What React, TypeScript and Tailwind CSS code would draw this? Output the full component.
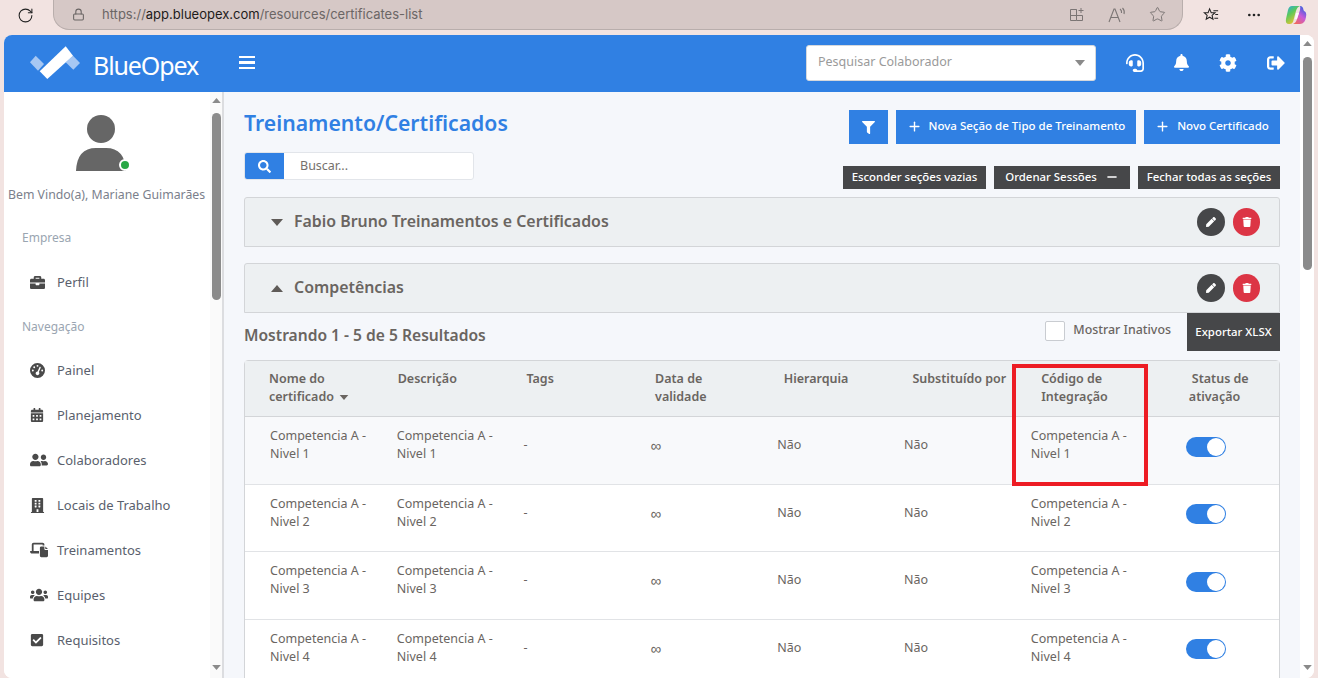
import React from 'react';
import { FaBell, FaBriefcase, FaBuilding, FaCalendarAlt, FaCheckSquare, FaCog, FaFilter, FaHeadset, FaPen, FaSearch, FaSignOutAlt, FaTrash, FaUserFriends, FaUsers } from 'react-icons/fa';
import { FaGaugeHigh, FaLaptopFile } from 'react-icons/fa6';
import { Ellipsis, Lock, Minus, Plus, RotateCw, Star } from 'lucide-react';

const navItems = [
  { label: 'Painel', icon: FaGaugeHigh, size: 15 },
  { label: 'Planejamento', icon: FaCalendarAlt, size: 14 },
  { label: 'Colaboradores', icon: FaUserFriends, size: 18 },
  { label: 'Locais de Trabalho', icon: FaBuilding, size: 15 },
  { label: 'Treinamentos', icon: FaLaptopFile, size: 18 },
  { label: 'Equipes', icon: FaUsers, size: 18 },
  { label: 'Requisitos', icon: FaCheckSquare, size: 14 },
];

const rows = [1, 2, 3, 4, 5];

const Caret = ({ up, className }: { up?: boolean; className?: string }) => (
  <svg viewBox="0 0 12 7" className={className}>
    <path d={up ? 'M6 0 12 7H0Z' : 'M0 0H12L6 7Z'} fill="currentColor" />
  </svg>
);

const SectionHeader = ({ title, open }: { title: string; open?: boolean }) => (
  <div className="flex h-[50px] items-center rounded-t-[3px] border border-[#d3d5d8] bg-[#edf0f2] pl-[26px] pr-[19px]">
    <Caret up={open} className="mr-[11px] h-[7px] w-[12px] text-[#5f5b58]" />
    <span className="text-[15.9px] font-semibold text-[#6a6561]">{title}</span>
    <div className="ml-auto flex gap-[8px]">
      <button className="flex h-[28px] w-[28px] items-center justify-center rounded-full bg-[#464749] text-white">
        <FaPen size={10} />
      </button>
      <button className="flex h-[28px] w-[27px] items-center justify-center rounded-full bg-[#dc3545] text-white">
        <FaTrash size={10} />
      </button>
    </div>
  </div>
);

export default function App() {
  return (
    <div className="flex h-[678px] w-[1318px] flex-col overflow-hidden bg-[#f2e3e1] font-['Noto_Sans',sans-serif] text-[13px] text-[#6a6561]">
      {/* browser chrome */}
      <div className="flex h-[35px] shrink-0 items-start">
        <div className="flex h-[30px] w-[53px] items-center justify-center pr-[3px]">
          <RotateCw size={17} strokeWidth={1.5} className="text-[#222]" />
        </div>
        <div className="flex h-[30px] w-[1130px] items-center rounded-b-[16px] border border-t-0 border-[#b9aeac] bg-[#d6c8c6] pl-[18px] pr-[16px] font-['Inter',sans-serif] text-[13px]">
          <Lock size={13} className="text-[#6b6665]" />
          <span className="ml-[17px] text-[#6b6665]">https://<span className="text-[#1d1b1b]">app.blueopex.com</span>/resources/certificates-list</span>
          <div className="ml-auto flex items-center gap-[23px] text-[#7b7574]">
            <svg viewBox="0 0 16 16" className="h-[16px] w-[16px]" fill="none" stroke="currentColor">
              <path d="M1.5 2.5h6v11h-6zM1.5 8.5h12v5h-6M7.5 8.5v-6M12 1v5M9.5 3.5h5" />
            </svg>
            <svg viewBox="0 0 18 16" className="h-[16px] w-[18px]" fill="none" stroke="currentColor" strokeWidth="1.1">
              <path d="M1 15 6 2h1l5 13M3 10.5h7.5M12 2q2 1.5 1.5 4M14.5 1q2.5 2.5 1.5 6" />
            </svg>
            <Star size={17} strokeWidth={1.4} />
          </div>
        </div>
        <div className="flex h-[30px] flex-1 items-center text-[#222]">
          <svg viewBox="0 0 18 18" className="ml-[20px] h-[17px] w-[17px]" fill="none" stroke="currentColor" strokeWidth="1.1">
            <path d="M7 2 8.7 6h4L9.6 8.8l1 4.2L7 10.8 3.4 13l1-4.2L1.4 6h4ZM11 4h5M13 8h3M12 12h4" />
          </svg>
          <Ellipsis size={16} className="ml-[26px]" />
          <svg viewBox="0 0 24 24" className="ml-[22px] h-[24px] w-[24px]">
            <defs>
              <linearGradient id="copilotLeft" x1="0" y1="0" x2="0.6" y2="1">
                <stop offset="0" stopColor="#28a8e8" />
                <stop offset="0.45" stopColor="#5cc95a" />
                <stop offset="1" stopColor="#f5c330" />
              </linearGradient>
              <linearGradient id="copilotRight" x1="0.8" y1="0" x2="0.2" y2="1">
                <stop offset="0" stopColor="#2b5fe0" />
                <stop offset="0.5" stopColor="#c85ad8" />
                <stop offset="1" stopColor="#f2695a" />
              </linearGradient>
            </defs>
            <path d="M8 3h8q-3 1-4 5l-3 11q-1 2-3 2H5Q1 21 2 16l2-9q1-4 4-4Z" fill="url(#copilotLeft)" />
            <path d="M16 3q3 0 3.5 4l.5 1q3 1 2 6-1 7-6 7H9q3-1 4-5l3-9q.5-3 0-4Z" fill="url(#copilotRight)" />
            <path d="M12 10h3l-2 6h-2Z" fill="#fff" opacity="0.85" />
          </svg>
        </div>
      </div>

      <div className="flex min-h-0 flex-1 px-[4px]">
        <div className="flex min-w-0 flex-1 overflow-hidden rounded-[8px] bg-white">
          <div className="flex w-[1296px] flex-col">
            {/* top bar */}
            <header className="flex h-[57px] shrink-0 items-center bg-[#3080e3] pb-[2px] pr-[15px]">
              <svg viewBox="0 0 51 33" className="ml-[26px] h-[33px] w-[51px]">
                <path d="M0 16.3 5.7 9.7 14 18 8 24.7Z" fill="#a6c7f3" />
                <path d="M35.7 16.3 43 9.7 50 17 43.3 23.7Z" fill="#a6c7f3" />
                <path d="M9.7 25.3 17.3 33 43 9.7 35.7.3Z" fill="#fff" />
              </svg>
              <span className="ml-[12px] mt-[5px] text-[25px] leading-[30px] tracking-[-1.1px] text-white">BlueOpex</span>
              <div className="ml-[41px] flex w-[16px] flex-col gap-[3px]">
                <span className="h-[2.5px] bg-white" />
                <span className="h-[2.5px] bg-white" />
                <span className="h-[2.5px] bg-white" />
              </div>
              <div className="ml-auto flex h-[36px] w-[290px] items-center justify-between rounded-[3px] border border-[#d5d8dc] bg-white pl-[11px] pr-[10px] text-[12.5px] text-[#9a9a9a]">
                Pesquisar Colaborador
                <Caret className="h-[6px] w-[10px] text-[#8a8a8a]" />
              </div>
              <div className="ml-[30px] flex items-center text-white">
                <FaHeadset size={18} />
                <FaBell size={17} className="ml-[29px]" />
                <FaCog size={18} className="ml-[29px]" />
                <FaSignOutAlt size={18} className="ml-[30px]" />
              </div>
            </header>

            <div className="flex min-h-0 flex-1">
              {/* sidebar */}
              <aside className="flex w-[220px] shrink-0 border-r-2 border-[#dcdde0] bg-white">
                <div className="w-[206px] shrink-0">
                  <div className="relative ml-[72px] mt-[23px] h-[56px] w-[50px]">
                    <svg viewBox="0 0 50 56" className="h-[56px] w-[50px] text-[#666]" fill="currentColor">
                      <circle cx="25" cy="14" r="14" />
                      <path d="M0 56Q1 33 20 33H30Q49 33 50 56Z" />
                    </svg>
                    <span className="absolute bottom-[0px] right-[-5px] h-[12px] w-[12px] rounded-full border-2 border-white bg-[#28a745]" />
                  </div>
                  <p className="mt-[15px] whitespace-nowrap pl-[4px] text-[12.3px] text-[#7b7f8c]">Bem Vindo(a), Mariane Guimarães</p>
                  <p className="mt-[25px] pl-[18px] text-[12px] text-[#9aa5b1]">Empresa</p>
                  <div className="mt-[26px] flex h-[18px] items-center pl-[26px] text-[#5a5f6d]">
                    <span className="flex w-[27px] text-[#4a4a4a]"><FaBriefcase size={15} /></span>
                    <span>Perfil</span>
                  </div>
                  <p className="mt-[27px] pl-[18px] text-[12px] text-[#9aa5b1]">Navegação</p>
                  <nav className="mt-[25px] flex flex-col gap-[27px] pl-[26px] text-[#5a5f6d]">
                    {navItems.map(({ label, icon: Icon, size }) => (
                      <div key={label} className="flex h-[18px] items-center">
                        <span className="flex w-[27px] text-[#4a4a4a]"><Icon size={size} /></span>
                        <span>{label}</span>
                      </div>
                    ))}
                  </nav>
                </div>
                <div className="flex w-[12px] flex-col items-center bg-[#fafafa] pt-[6px]">
                  <Caret up className="h-[5px] w-[9px] text-[#8a8a8a]" />
                  <div className="mt-[10px] h-[187px] w-[9px] rounded-full bg-[#8b8b8b]" />
                  <Caret className="mt-auto mb-[8px] h-[5px] w-[9px] text-[#8a8a8a]" />
                </div>
              </aside>

              {/* main */}
              <main className="relative min-w-0 flex-1 bg-[#f5f7fb] pl-[20px] pr-[20px]">
                <div className="mt-[18px] flex items-start">
                  <h1 className="text-[21.2px] font-semibold leading-[26px] text-[#3080e3]">Treinamento/Certificados</h1>
                  <div className="ml-auto flex gap-[8px] text-white">
                    <button className="flex h-[34px] w-[39px] items-center justify-center bg-[#3080e3]"><FaFilter size={13} /></button>
                    <button className="flex h-[34px] w-[240px] items-center justify-center gap-[7px] bg-[#3080e3] pb-[2px] text-[11.5px] font-medium"><Plus size={15} strokeWidth={2.2} />Nova Seção de Tipo de Treinamento</button>
                    <button className="flex h-[34px] w-[136px] items-center justify-center gap-[7px] bg-[#3080e3] pb-[2px] text-[11.5px] font-medium"><Plus size={15} strokeWidth={2.2} />Novo Certificado</button>
                  </div>
                </div>
                <div className="mt-[8px] flex h-[37px] items-start justify-between">
                  <div className="flex h-[28px] w-[230px] overflow-hidden rounded-[3px] border border-[#e2e5ea] bg-white">
                    <div className="flex w-[39px] items-center justify-center bg-[#3080e3] text-white"><FaSearch size={13} /></div>
                    <span className="flex items-center pl-[16px] text-[12.5px] text-[#74706c]">Buscar...</span>
                  </div>
                  <div className="mt-[14px] flex gap-[8px] text-[11.4px] font-medium text-white">
                    <button className="h-[23px] w-[143px] bg-[#464749] pb-[2px]">Esconder seções vazias</button>
                    <button className="flex h-[23px] w-[136px] items-center justify-center gap-[8px] bg-[#464749] pb-[2px]">Ordenar Sessões <Minus size={14} strokeWidth={2.4} /></button>
                    <button className="h-[23px] w-[142px] bg-[#464749] pb-[2px]">Fechar todas as seções</button>
                  </div>
                </div>
                <div className="mt-[8px]"><SectionHeader title="Fabio Bruno Treinamentos e Certificados" /></div>
                <div className="mt-[16px]"><SectionHeader title="Competências" open /></div>

                <div className="flex h-[47px] items-start">
                  <span className="mt-[11px] text-[15.6px] font-semibold leading-[22px]">Mostrando 1 - 5 de 5 Resultados</span>
                  <div className="ml-auto mt-[8px] flex items-center">
                    <span className="h-[20px] w-[20px] rounded-[2px] border border-[#c9ccd1] bg-white" />
                    <span className="ml-[8px] -mt-[2px] text-[12.4px] font-medium">Mostrar Inativos</span>
                  </div>
                  <button className="ml-[16px] h-[38px] w-[93px] bg-[#464749] text-[11.4px] font-medium text-white">Exportar XLSX</button>
                </div>

                {/* table */}
                <div className="rounded-t-[4px] border border-[#d3d5d8] bg-white">
                  <div className="grid h-[56px] grid-cols-[repeat(8,128.7px)] border-b border-[#d3d5d8] bg-[#edf0f2] pl-[24px] pt-[9px] text-[12.5px] font-semibold leading-[18px]">
                    <span>Nome do<br />certificado <Caret className="ml-[2px] inline h-[5px] w-[10px] align-middle" /></span>
                    <span>Descrição</span>
                    <span>Tags</span>
                    <span>Data de<br />validade</span>
                    <span>Hierarquia</span>
                    <span className="whitespace-nowrap">Substituído por</span>
                    <span>Código de<br />Integração</span>
                    <span className="pl-[22px] whitespace-nowrap">Status de<br /><span className="-ml-[3px]">ativação</span></span>
                  </div>
                  {rows.map((n, i) => (
                    <div key={n} className={`grid h-[67.5px] grid-cols-[repeat(6,126.8px)_155px_auto] items-center border-b border-[#e1e3e6] pl-[25px] text-[12.5px] leading-[18px] ${i === 0 ? 'bg-[#f8f9fb]' : 'bg-white'}`}>
                      <span className="w-[100px] -mt-[10px]">Competencia A - Nivel {n}</span>
                      <span className="w-[100px] -mt-[10px]">Competencia A - Nivel {n}</span>
                      <span className="-mt-[10px]">-</span>
                      <span className="-mt-[10px] text-[15px]">∞</span>
                      <span className="-mt-[10px]">Não</span>
                      <span className="-mt-[10px]">Não</span>
                      <span className="w-[100px] -mt-[10px]">Competencia A - Nivel {n}</span>
                      <span className="relative -mt-[7px] h-[20px] w-[40px] rounded-full bg-[#3080e3]">
                        <span className="absolute right-[1px] top-[1px] h-[18px] w-[18px] rounded-full bg-white" />
                      </span>
                    </div>
                  ))}
                </div>

                <div className="absolute left-[788px] top-[272px] h-[122px] w-[136px] border-[4px] border-[#ed1c24]" />
              </main>
            </div>
          </div>

          {/* page scrollbar */}
          <div className="flex w-[14px] flex-col items-center bg-white pt-[6px]">
            <Caret up className="h-[5px] w-[9px] text-[#8a8a8a]" />
            <div className="mt-[11px] h-[213px] w-[9px] rounded-full bg-[#8b8b8b]" />
            <Caret className="mt-auto mb-[8px] h-[5px] w-[9px] text-[#8a8a8a]" />
          </div>
        </div>
      </div>
    </div>
  );
}
